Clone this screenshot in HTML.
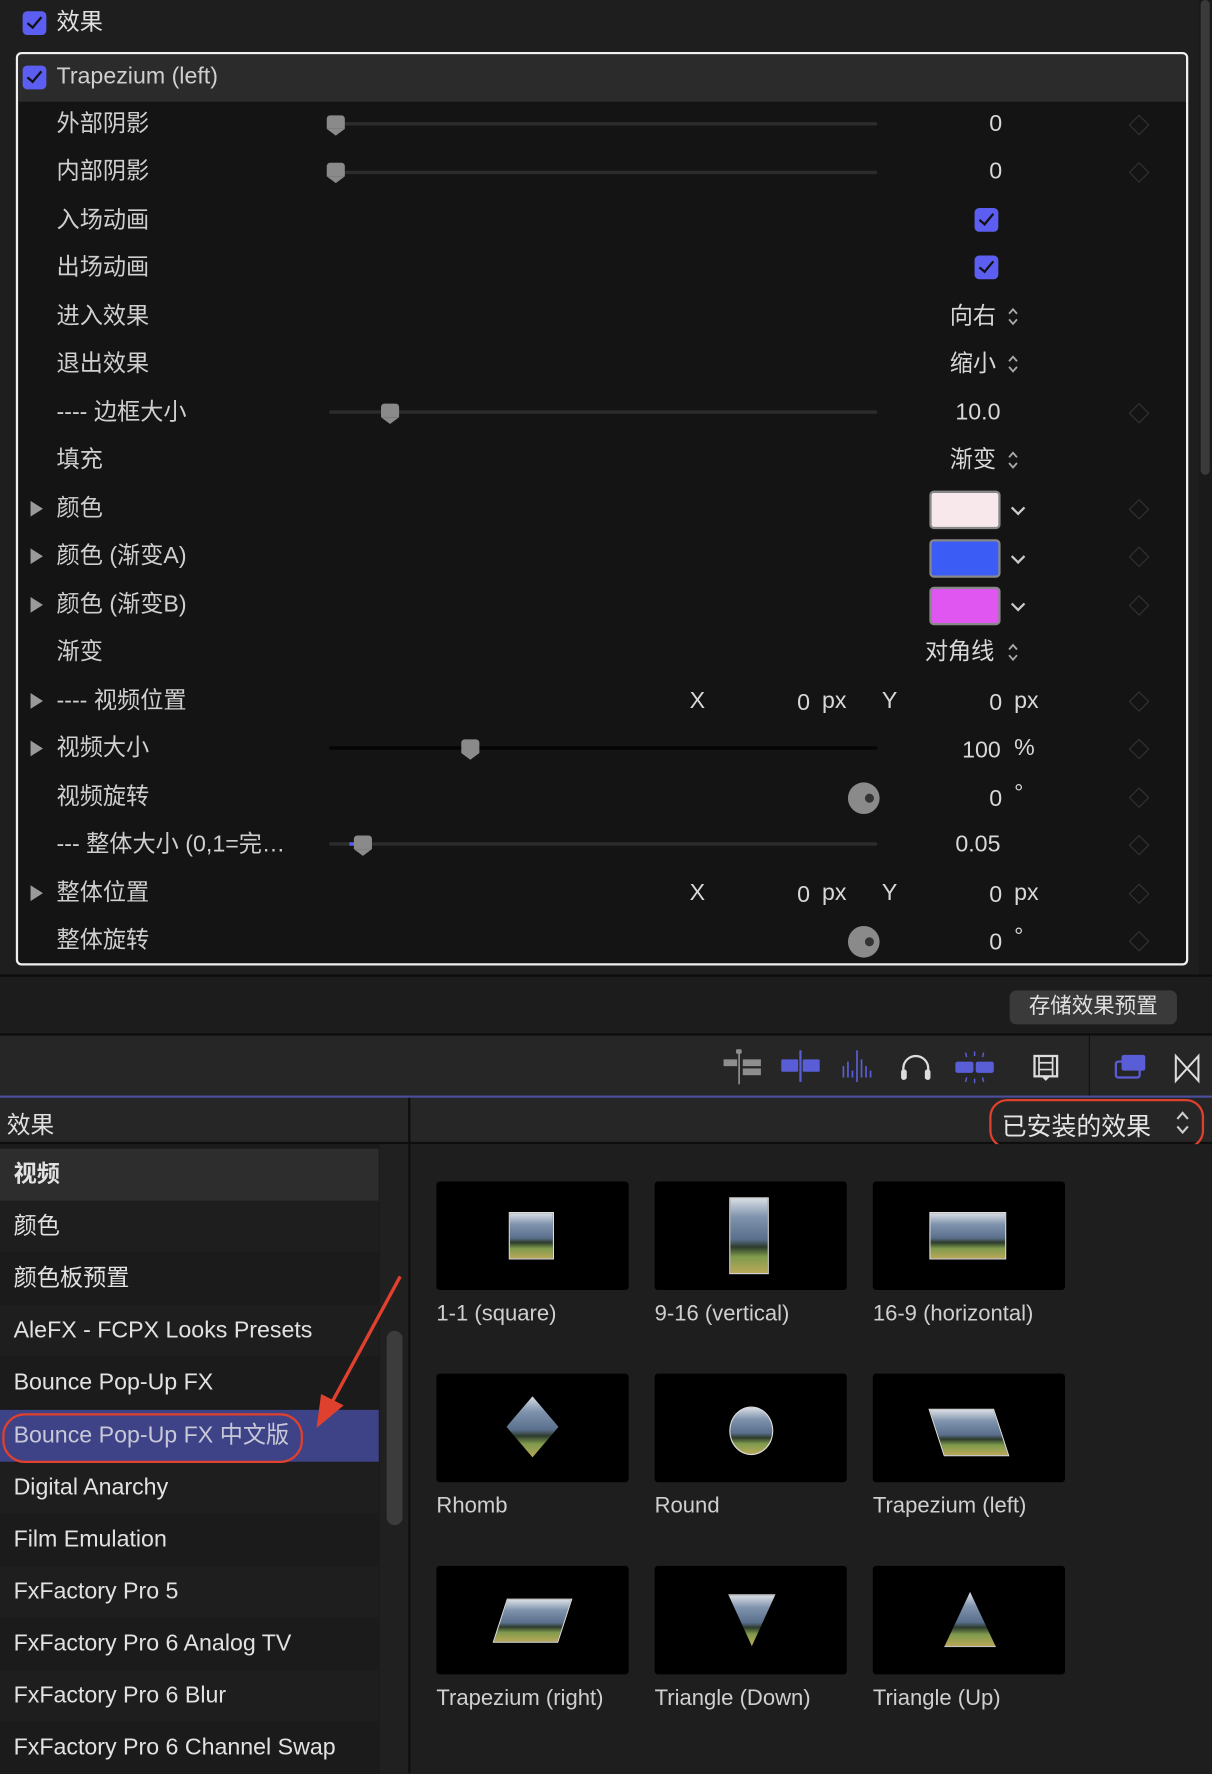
<!DOCTYPE html>
<html><head><meta charset="utf-8"><style>
html,body{margin:0;padding:0;width:1212px;height:1773px;overflow:hidden;background:#1e1e1e}
#s{position:absolute;left:0;top:0;width:1072px;height:1568px;transform:scale(1.130597);transform-origin:0 0;font-family:"Liberation Sans","Noto Sans CJK SC",sans-serif;color:#d4d4d4;background:#1e1e1e}
.a{position:absolute}
.l{position:absolute;left:50px;font-size:20.5px;line-height:24px;color:#cfcfcf;white-space:nowrap}
.v{position:absolute;font-size:20.5px;line-height:24px;color:#d8d8d8;white-space:nowrap}
.tr{position:absolute;left:27px;width:0;height:0;border-left:11px solid #9a9a9a;border-top:7px solid transparent;border-bottom:7px solid transparent}
.dm{position:absolute;left:1001px;width:11px;height:11px;border:1.5px solid #333;transform:rotate(45deg)}
.trk{position:absolute;left:291px;width:485px;height:3px;background:#2c2c2c;border-radius:2px}
.kn{position:absolute;width:16px;height:12px;background:#8a8a8a;border-radius:3px 3px 0 0}
.kn:after{content:"";position:absolute;left:0;top:12px;border-left:8px solid transparent;border-right:8px solid transparent;border-top:6px solid #8a8a8a}
.cb{position:absolute;width:21px;height:21px;background:#5b5ef0;border-radius:4px}
.cb:after{content:"";position:absolute;left:7px;top:2px;width:5px;height:11px;border-right:2.5px solid #111;border-bottom:2.5px solid #111;transform:rotate(40deg)}
.ud{position:absolute;width:10px;height:18px}
.sw{position:absolute;left:822px;width:63px;height:34px;border:2px solid #888;border-radius:4px;box-sizing:border-box}
.chev{position:absolute;left:896px;width:7px;height:7px;border-right:2px solid #ccc;border-bottom:2px solid #ccc;transform:rotate(45deg)}
.dial{position:absolute;left:750px;width:28px;height:28px;border-radius:50%;background:#8a8a8a}
.dial:after{content:"";position:absolute;left:15px;top:10px;width:8px;height:8px;border-radius:50%;background:#333}
.li{position:absolute;left:0;width:335px;height:46px;font-size:20.5px;line-height:46px;padding-left:12px;box-sizing:border-box;color:#e2e2e2;white-space:nowrap}
.th{position:absolute;width:170px;height:96px;background:#000;border-radius:3px}
.tl{position:absolute;font-size:19.5px;color:#cfcfcf;white-space:nowrap}
.img{position:absolute;background:linear-gradient(#d8dde3 0%,#7f93ad 25%,#5a6f8c 55%,#2d3b2c 65%,#7f9a4c 78%,#b9a858 100%);border:1px solid #ddd}
</style></head><body><div id="s">
<svg width="0" height="0" style="position:absolute"><defs><symbol id="ud" viewBox="0 0 10 18"><path d="M1.5 6.5L5 2.5 8.5 6.5M1.5 11.5L5 15.5 8.5 11.5" fill="none" stroke="#aaa" stroke-width="1.6"/></symbol></defs></svg>
<div class="a" style="left:0;top:0;width:1060px;height:44px;background:#1e1e1e"></div>
<div class="cb" style="left:20px;top:10px"></div>
<div class="v" style="left:50px;top:8px;color:#e0e0e0">效果</div>
<div class="a" style="left:1060px;top:0;width:12px;height:862px;background:#1a1a1a"></div>
<div class="a" style="left:1062px;top:0;width:8px;height:420px;background:#3a3a3a;border-radius:4px"></div>
<div class="a" style="left:14px;top:46px;width:1037px;height:808px;border:2px solid #f0f0f0;border-radius:5px;box-sizing:border-box;background:#141414;overflow:hidden">
 <div class="a" style="left:0;top:0;width:1033px;height:42px;background:#2b2b2b"></div>
</div>
<div class="cb" style="left:20px;top:58px"></div>
<div class="v" style="left:50px;top:56px;color:#cfcfcf">Trapezium (left)</div>

<div class="l" style="top:98px">外部阴影</div><div class="trk" style="left:291px;top:108px"></div><div class="kn" style="left:289px;top:102px"></div><div class="v" style="left:875px;top:98px">0</div><div class="dm" style="top:104px"></div>
<div class="l" style="top:140px">内部阴影</div><div class="trk" style="left:291px;top:151px"></div><div class="kn" style="left:289px;top:144px"></div><div class="v" style="left:875px;top:140px">0</div><div class="dm" style="top:146px"></div>
<div class="l" style="top:183px">入场动画</div><div class="cb" style="left:862px;top:184px"></div>
<div class="l" style="top:225px">出场动画</div><div class="cb" style="left:862px;top:226px"></div>
<div class="l" style="top:268px">进入效果</div><div class="v" style="left:840px;top:268px">向右</div><svg class="ud" style="left:891px;top:271px"><use href="#ud"/></svg>
<div class="l" style="top:310px">退出效果</div><div class="v" style="left:840px;top:310px">缩小</div><svg class="ud" style="left:891px;top:313px"><use href="#ud"/></svg>
<div class="l" style="top:353px">---- 边框大小</div><div class="trk" style="top:363px"></div><div class="kn" style="left:337px;top:357px"></div><div class="v" style="left:845px;top:353px">10.0</div><div class="dm" style="top:359px"></div>
<div class="l" style="top:395px">填充</div><div class="v" style="left:840px;top:395px">渐变</div><svg class="ud" style="left:891px;top:398px"><use href="#ud"/></svg>
<div class="tr" style="top:443px"></div><div class="l" style="top:438px">颜色</div><div class="sw" style="top:434px;background:#f8e8ec"></div><div class="chev" style="top:445px"></div><div class="dm" style="top:444px"></div>
<div class="tr" style="top:485px"></div><div class="l" style="top:480px">颜色 (渐变A)</div><div class="sw" style="top:477px;background:#3b5cf5"></div><div class="chev" style="top:488px"></div><div class="dm" style="top:486px"></div>
<div class="tr" style="top:528px"></div><div class="l" style="top:523px">颜色 (渐变B)</div><div class="sw" style="top:519px;background:#e056f0"></div><div class="chev" style="top:530px"></div><div class="dm" style="top:529px"></div>
<div class="l" style="top:565px">渐变</div><div class="v" style="left:818px;top:565px">对角线</div><svg class="ud" style="left:891px;top:568px"><use href="#ud"/></svg>
<div class="tr" style="top:613px"></div><div class="l" style="top:608px">---- 视频位置</div><div class="v" style="left:610px;top:608px">X</div><div class="v" style="left:705px;top:610px">0</div><div class="v" style="left:727px;top:608px">px</div><div class="v" style="left:780px;top:608px">Y</div><div class="v" style="left:875px;top:610px">0</div><div class="v" style="left:897px;top:608px">px</div><div class="dm" style="top:614px"></div>
<div class="tr" style="top:655px"></div><div class="l" style="top:650px">视频大小</div><div class="trk" style="top:660px;background:#050505"></div><div class="kn" style="left:408px;top:654px"></div><div class="v" style="left:851px;top:652px">100</div><div class="v" style="left:897px;top:650px">%</div><div class="dm" style="top:656px"></div>
<div class="l" style="top:693px">视频旋转</div><div class="dial" style="top:692px"></div><div class="v" style="left:875px;top:695px">0</div><div class="v" style="left:897px;top:690px">°</div><div class="dm" style="top:699px"></div>
<div class="l" style="top:735px">--- 整体大小 (0,1=完…</div><div class="trk" style="top:745px"></div><div class="a" style="left:309px;top:745px;width:6px;height:3px;background:#5b5ef0"></div><div class="kn" style="left:313px;top:739px"></div><div class="v" style="left:845px;top:735px">0.05</div><div class="dm" style="top:741px"></div>
<div class="tr" style="top:783px"></div><div class="l" style="top:778px">整体位置</div><div class="v" style="left:610px;top:778px">X</div><div class="v" style="left:705px;top:780px">0</div><div class="v" style="left:727px;top:778px">px</div><div class="v" style="left:780px;top:778px">Y</div><div class="v" style="left:875px;top:780px">0</div><div class="v" style="left:897px;top:778px">px</div><div class="dm" style="top:784px"></div>
<div class="l" style="top:820px">整体旋转</div><div class="dial" style="top:819px"></div><div class="v" style="left:875px;top:822px">0</div><div class="v" style="left:897px;top:817px">°</div><div class="dm" style="top:826px"></div>

<div class="a" style="left:0;top:862px;width:1072px;height:2px;background:#0c0c0c"></div>
<div class="a" style="left:0;top:864px;width:1072px;height:51px;background:#1c1c1c"></div>
<div class="a" style="left:893px;top:876px;width:148px;height:30px;background:#3a3a3a;border-radius:6px;font-size:19px;line-height:30px;text-align:center;color:#e0e0e0">存储效果预置</div>
<div class="a" style="left:0;top:914px;width:1072px;height:2px;background:#0c0c0c"></div>
<div class="a" style="left:0;top:916px;width:1072px;height:54px;background:#262626"></div>
<div class="a" style="left:963px;top:916px;width:1px;height:54px;background:#111"></div>
<svg class="a" style="left:636px;top:925px" width="430" height="40" viewBox="0 0 430 40">
 <g fill="#8e8e8e"><rect x="4" y="12" width="12" height="6"/><rect x="21" y="12" width="16" height="6"/><rect x="21" y="20" width="16" height="6"/><rect x="17" y="6" width="1.5" height="28"/><rect x="15" y="3" width="5" height="4" rx="1"/></g>
 <g fill="#5a5ed6"><rect x="55" y="12" width="15" height="11" rx="1"/><rect x="74" y="12" width="15" height="11" rx="1"/><rect x="71" y="4" width="2" height="28"/></g>
 <g stroke="#5a5ed6" stroke-width="1.5"><path d="M110 18v10M114 14v14M118 22v6M122 4v28M126 12v16M130 18v10M134 22v6"/></g>
 <path d="M163 30v-10a11 11 0 0 1 22 0v10" stroke="#ddd" stroke-width="2" fill="none"/><rect x="161" y="21" width="5" height="9" rx="2" fill="#ddd"/><rect x="182" y="21" width="5" height="9" rx="2" fill="#ddd"/>
 <g fill="#5a5ed6"><rect x="209" y="14" width="16" height="10" rx="2"/><rect x="227" y="14" width="16" height="10" rx="2"/></g>
 <g stroke="#5a5ed6" stroke-width="1.3"><path d="M218 6l1 4M226 5v4M234 6l-1 4M218 32l1-4M226 33v-4M234 32l-1-4"/></g>
 <rect x="279" y="9" width="20" height="18" fill="none" stroke="#ddd" stroke-width="2"/><path d="M283 9v18M295 9v18M283 15h12M283 21h12" stroke="#ddd" stroke-width="1.5"/><path d="M286 28l3 3 3-3z" fill="#ddd"/>
 <rect x="356" y="8" width="21" height="14" rx="2" fill="#5a5ed6"/><rect x="351" y="14" width="21" height="14" rx="2" fill="none" stroke="#5a5ed6" stroke-width="2"/>
 <path d="M404 9v22l20-22v22z" fill="none" stroke="#ddd" stroke-width="1.8"/>
</svg>
<div class="a" style="left:0;top:969px;width:1072px;height:2px;background:#4b4f9e"></div>
<div class="a" style="left:0;top:971px;width:1072px;height:40px;background:#262626"></div>
<div class="a" style="left:6px;top:979px;font-size:21px;color:#e0e0e0">效果</div>
<div class="a" style="left:361px;top:971px;width:2px;height:597px;background:#0e0e0e"></div>
<div class="a" style="left:0;top:1010px;width:1072px;height:2px;background:#0e0e0e"></div>
<div class="a" style="left:886px;top:979px;font-size:22px;color:#e4e4e4">已安装的效果</div><svg class="a" style="left:1039px;top:981px" width="14" height="24" viewBox="0 0 10 18"><path d="M1.5 6.5L5 2.5 8.5 6.5M1.5 11.5L5 15.5 8.5 11.5" fill="none" stroke="#ccc" stroke-width="1.4"/></svg>
<div class="a" style="left:875px;top:972px;width:190px;height:44px;border:2.5px solid #e0402e;border-radius:16px;box-sizing:border-box"></div>
<div class="a" style="left:0;top:1012px;width:361px;height:556px;background:#1b1b1b"></div>
<div class="li" style="top:1016px;background:#2d2d2d;font-weight:bold">视频</div>
<div class="li" style="top:1062px;background:#1e1e1e">颜色</div>
<div class="li" style="top:1108px;background:#1b1b1b">颜色板预置</div>
<div class="li" style="top:1154px;background:#1e1e1e">AleFX - FCPX Looks Presets</div>
<div class="li" style="top:1200px;background:#1b1b1b">Bounce Pop-Up FX</div>
<div class="li" style="top:1247px;background:#3d4386;color:#c8c8d8">Bounce Pop-Up FX 中文版</div>
<div class="li" style="top:1293px;background:#1e1e1e">Digital Anarchy</div>
<div class="li" style="top:1339px;background:#1b1b1b">Film Emulation</div>
<div class="li" style="top:1385px;background:#1e1e1e">FxFactory Pro 5</div>
<div class="li" style="top:1431px;background:#1b1b1b">FxFactory Pro 6 Analog TV</div>
<div class="li" style="top:1477px;background:#1e1e1e">FxFactory Pro 6 Blur</div>
<div class="li" style="top:1523px;background:#1b1b1b">FxFactory Pro 6 Channel Swap</div>
<div class="a" style="left:336px;top:1012px;width:25px;height:556px;background:#202020"></div>
<div class="a" style="left:342px;top:1177px;width:14px;height:172px;background:#3c3c3c;border-radius:7px"></div>
<div class="a" style="left:2px;top:1250px;width:266px;height:44px;border:2.5px solid #e0402e;border-radius:20px;box-sizing:border-box"></div>
<svg class="a" style="left:270px;top:1125px" width="90" height="140"><path d="M84 4L20 122" stroke="#e0402e" stroke-width="3"/><path d="M10 138l4-30 20 10z" fill="#e0402e"/></svg>
<div class="a" style="left:363px;top:1012px;width:709px;height:556px;background:#1e1e1e"></div>
<div class="th" style="left:386px;top:1045px"><div class="img" style="left:64px;top:27px;width:38px;height:40px"></div></div>
<div class="th" style="left:579px;top:1045px"><div class="img" style="left:66px;top:14px;width:33px;height:66px"></div></div>
<div class="th" style="left:772px;top:1045px"><div class="img" style="left:50px;top:27px;width:66px;height:40px"></div></div>
<div class="tl" style="left:386px;top:1151px">1-1 (square)</div>
<div class="tl" style="left:579px;top:1151px">9-16 (vertical)</div>
<div class="tl" style="left:772px;top:1151px">16-9 (horizontal)</div>
<div class="th" style="left:386px;top:1215px"><div class="img" style="left:62px;top:20px;width:46px;height:54px;border:none;clip-path:polygon(50% 0,100% 50%,50% 100%,0 50%)"></div></div>
<div class="th" style="left:579px;top:1215px"><div class="img" style="left:66px;top:29px;width:37px;height:41px;border-radius:50%"></div></div>
<div class="th" style="left:772px;top:1215px"><div class="img" style="left:56px;top:31px;width:56px;height:40px;transform:skewX(18deg)"></div></div>
<div class="tl" style="left:386px;top:1321px">Rhomb</div>
<div class="tl" style="left:579px;top:1321px">Round</div>
<div class="tl" style="left:772px;top:1321px">Trapezium (left)</div>
<div class="th" style="left:386px;top:1385px"><div class="img" style="left:56px;top:29px;width:56px;height:37px;transform:skewX(-18deg)"></div></div>
<div class="th" style="left:579px;top:1385px"><div class="img" style="left:65px;top:25px;width:40px;height:44px;clip-path:polygon(0 0,100% 0,50% 100%)"></div></div>
<div class="th" style="left:772px;top:1385px"><div class="img" style="left:63px;top:23px;width:44px;height:47px;clip-path:polygon(50% 0,100% 100%,0 100%)"></div></div>
<div class="tl" style="left:386px;top:1491px">Trapezium (right)</div>
<div class="tl" style="left:579px;top:1491px">Triangle (Down)</div>
<div class="tl" style="left:772px;top:1491px">Triangle (Up)</div>
</div></body></html>
